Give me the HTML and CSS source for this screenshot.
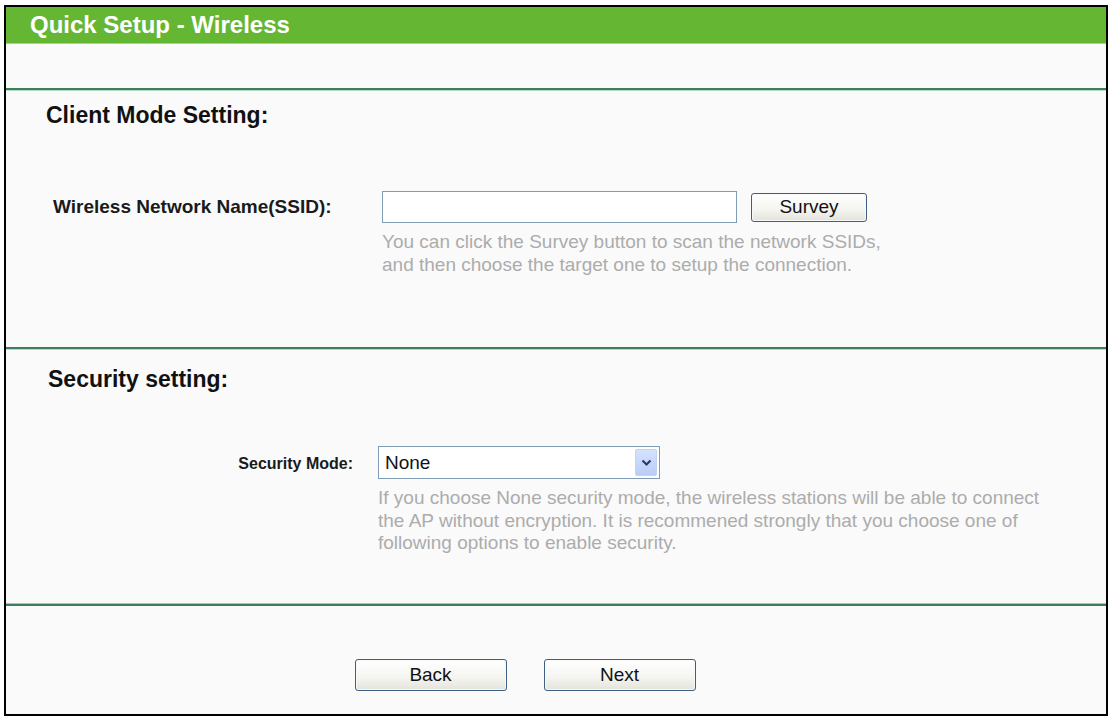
FILE: index.html
```html
<!DOCTYPE html>
<html>
<head>
<meta charset="utf-8">
<title>Quick Setup - Wireless</title>
<link rel="stylesheet" href="styles.css">
</head>
<body>
<div class="frame">
  <div class="title-bar">Quick Setup - Wireless</div>
  <div class="spacer"></div>
  <div class="rule"></div>

  <section class="section client">
    <h2 class="section-title">Client Mode Setting:</h2>
    <div class="row ssid-row">
      <label class="label label-left">Wireless Network Name(SSID):</label>
      <div class="field">
        <div class="field-line">
          <input class="text-input" type="text">
          <button class="btn btn-survey" type="button">Survey</button>
        </div>
        <p class="help">You can click the Survey button to scan the network SSIDs,<br>and then choose the target one to setup the connection.</p>
      </div>
    </div>
  </section>

  <div class="rule"></div>

  <section class="section security">
    <h2 class="section-title">Security setting:</h2>
    <div class="row mode-row">
      <label class="label label-right">Security Mode:</label>
      <div class="field">
        <div class="select">
          <span class="select-value">None</span>
          <span class="select-arrow">
            <svg width="11" height="8" viewBox="0 0 11 8"><path d="M1.5 1.5 L5.5 5.5 L9.5 1.5" fill="none" stroke="#2a3b66" stroke-width="2.2"/></svg>
          </span>
        </div>
        <p class="help">If you choose None security mode, the wireless stations will be able to connect<br>the AP without encryption. It is recommened strongly that you choose one of<br>following options to enable security.</p>
      </div>
    </div>
  </section>

  <div class="rule"></div>

  <div class="actions">
    <button class="btn btn-nav" type="button">Back</button>
    <button class="btn btn-nav" type="button">Next</button>
  </div>
</div>
</body>
</html>
```

FILE: styles.css
```css
* { box-sizing: border-box; }
html, body { margin: 0; padding: 0; background: #ffffff; }
body { font-family: "Liberation Sans", Arial, sans-serif; }

.frame {
  margin: 5px 0 0 4px;
  width: 1104px;
  height: 711px;
  border: 2px solid #000;
  background: #fafafa;
  display: flex;
  flex-direction: column;
}

.title-bar {
  height: 37px;
  background: #65b733;
  border-bottom: 1px solid #9fd97a;
  color: #fff;
  font-weight: bold;
  font-size: 24px;
  line-height: 35px;
  padding-left: 24px;
}

.spacer { height: 44px; }

.rule {
  height: 3px;
  background: linear-gradient(#9ccbb0 0, #9ccbb0 0.5px, #3f7d5f 0.5px, #3f7d5f 2.5px, #b5dcc5 2.5px);
}

.section { display: flex; flex-direction: column; }
.client { height: 256px; padding-top: 12px; }
.security { height: 253px; padding-top: 17px; }

.section-title {
  margin: 0;
  font-size: 23px;
  line-height: 24px;
  font-weight: bold;
  color: #111;
}
.client .section-title { padding-left: 40px; }
.security .section-title { padding-left: 42px; }

.row {
  display: grid;
  align-items: start;
}
.ssid-row { grid-template-columns: 376px 1fr; margin-top: 64px; }
.mode-row { grid-template-columns: 372px 1fr; margin-top: 55px; }

.label {
  font-size: 19px;
  font-weight: bold;
  color: #1a1a1a;
  line-height: 22px;
}
.label-left { padding-left: 47px; padding-top: 5px; }
.label-right { text-align: right; padding-right: 25px; padding-top: 7px; font-size: 16px; }

.field-line { display: flex; align-items: center; gap: 14px; }

.text-input {
  width: 355px;
  height: 32px;
  border: 1px solid #7f9db9;
  background: #fff;
  margin: 0;
}

.btn {
  font-family: "Liberation Sans", Arial, sans-serif;
  font-size: 19px;
  color: #111;
  border: 1px solid #3d5f82;
  border-radius: 3px;
  background: linear-gradient(#ffffff, #f4f4f0 60%, #e4e2da);
  box-shadow: inset 0 0 0 1px #f8f8f8;
  padding: 0;
  margin: 0;
}
.btn-survey { width: 116px; height: 29px; }

.help {
  margin: 8px 0 0;
  font-size: 19px;
  line-height: 22.5px;
  color: #acacac;
}

.select {
  width: 282px;
  height: 33px;
  border: 1px solid #7f9db9;
  background: #fff;
  display: flex;
  align-items: center;
  justify-content: space-between;
  padding: 2px 2px 2px 6px;
}
.select-value { font-size: 19px; color: #111; }
.select-arrow {
  width: 22px;
  height: 27px;
  background: linear-gradient(#d4e2ff, #b9cdf7);
  border: 1px solid #c0d2f5;
  border-radius: 2px;
  display: flex;
  align-items: center;
  justify-content: center;
}

.actions {
  flex: 1;
  display: flex;
  justify-content: center;
  align-items: flex-start;
  gap: 37px;
  padding-top: 53px;
  padding-right: 62px;
}
.btn-nav { width: 152px; height: 32px; }
```
